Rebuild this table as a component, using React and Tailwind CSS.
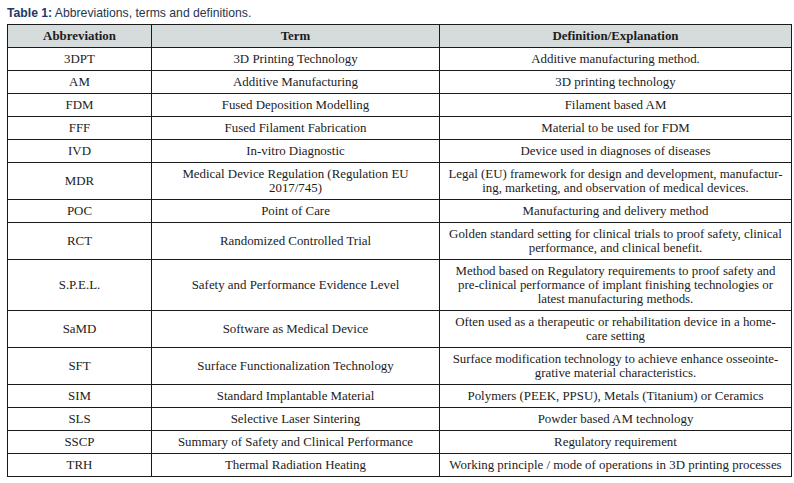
import React from 'react';

const rows = [
  ['3DPT', ['3D Printing Technology'], ['Additive manufacturing method.']],
  ['AM', ['Additive Manufacturing'], ['3D printing technology']],
  ['FDM', ['Fused Deposition Modelling'], ['Filament based AM']],
  ['FFF', ['Fused Filament Fabrication'], ['Material to be used for FDM']],
  ['IVD', ['In-vitro Diagnostic'], ['Device used in diagnoses of diseases']],
  [
    'MDR',
    ['Medical Device Regulation (Regulation EU', '2017/745)'],
    ['Legal (EU) framework for design and development, manufactur-', 'ing, marketing, and observation of medical devices.']
  ],
  ['POC', ['Point of Care'], ['Manufacturing and delivery method']],
  [
    'RCT',
    ['Randomized Controlled Trial'],
    ['Golden standard setting for clinical trials to proof safety, clinical', 'performance, and clinical benefit.']
  ],
  [
    'S.P.E.L.',
    ['Safety and Performance Evidence Level'],
    [
      'Method based on Regulatory requirements to proof safety and',
      'pre-clinical performance of implant finishing technologies or',
      'latest manufacturing methods.'
    ]
  ],
  [
    'SaMD',
    ['Software as Medical Device'],
    ['Often used as a therapeutic or rehabilitation device in a home-', 'care setting']
  ],
  [
    'SFT',
    ['Surface Functionalization Technology'],
    ['Surface modification technology to achieve enhance osseointe-', 'grative material characteristics.']
  ],
  ['SIM', ['Standard Implantable Material'], ['Polymers (PEEK, PPSU), Metals (Titanium) or Ceramics']],
  ['SLS', ['Selective Laser Sintering'], ['Powder based AM technology']],
  ['SSCP', ['Summary of Safety and Clinical Performance'], ['Regulatory requirement']],
  ['TRH', ['Thermal Radiation Heating'], ['Working principle / mode of operations in 3D printing processes']]
];

const Lines = ({ lines }) =>
  lines.map((line, i) => (
    <React.Fragment key={i}>
      {i > 0 && <br />}
      {line}
    </React.Fragment>
  ));

const cell = 'border border-[#1a1a1a] py-1 px-1 text-center align-middle whitespace-nowrap';

export default function App() {
  return (
    <div className="w-[794px] h-[483px] bg-white overflow-hidden">
      {/* Caption */}
      <p
        className="pt-[6px] mb-[3px] pl-[7px] text-[12.2px] leading-[15px] text-[#24364f]"
        style={{ fontFamily: '"Liberation Sans", Arial, sans-serif' }}
      >
        <span className="font-bold text-[#1f3864]">Table 1:</span> Abbreviations, terms and definitions.
      </p>

      {/* Table */}
      <table
        className="ml-[7px] w-[784px] border-collapse table-fixed text-[12.9px] leading-[14px] text-[#1c1c1c]"
        style={{ fontFamily: '"Liberation Serif", "Times New Roman", serif' }}
      >
        <colgroup>
          <col className="w-[144px]" />
          <col className="w-[288px]" />
          <col className="w-[352px]" />
        </colgroup>
        <thead>
          <tr className="bg-[#d6dbdb]">
            <th className={`${cell} font-bold`}>Abbreviation</th>
            <th className={`${cell} font-bold`}>Term</th>
            <th className={`${cell} font-bold`}>Definition/Explanation</th>
          </tr>
        </thead>
        <tbody>
          {rows.map(([abbr, term, def]) => (
            <tr key={abbr}>
              <td className={cell}>{abbr}</td>
              <td className={cell}>
                <Lines lines={term} />
              </td>
              <td className={cell}>
                <Lines lines={def} />
              </td>
            </tr>
          ))}
        </tbody>
      </table>
    </div>
  );
}
